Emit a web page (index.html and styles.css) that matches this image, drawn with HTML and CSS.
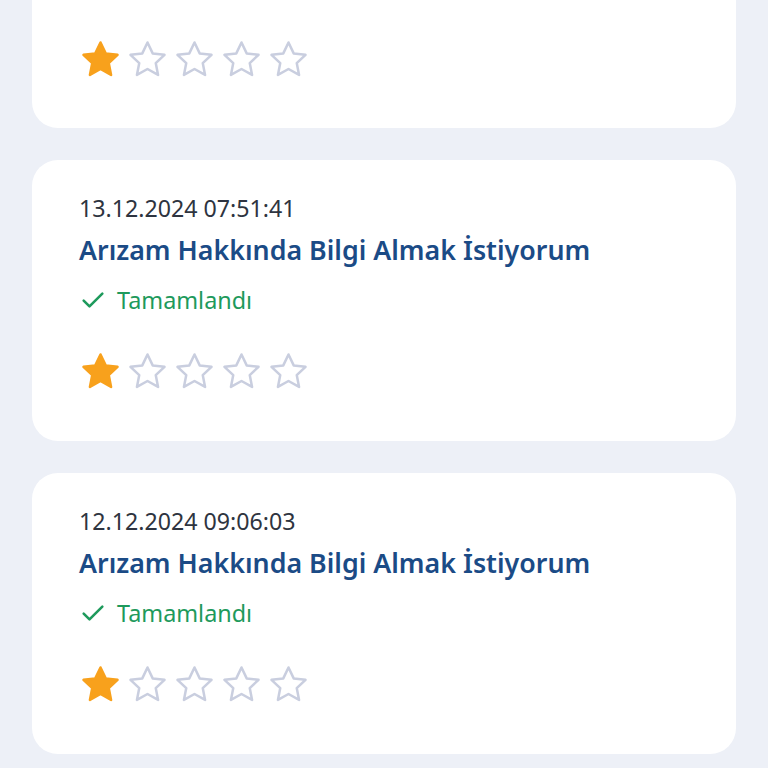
FILE: index.html
```html
<!DOCTYPE html>
<html lang="tr">
<head>
<meta charset="utf-8">
<link rel="stylesheet" href="styles.css">
</head>
<body>
<div class="list">
  <div class="card partial">
    <div class="stars">
      <svg class="star on" viewBox="0 0 24 24"><path d="M12 2.5l2.9 6.1 6.6.8-4.9 4.6 1.3 6.6L12 17.3l-5.9 3.3 1.3-6.6-4.9-4.6 6.6-.8z"/></svg>
      <svg class="star" viewBox="0 0 24 24"><path d="M12 2.5l2.9 6.1 6.6.8-4.9 4.6 1.3 6.6L12 17.3l-5.9 3.3 1.3-6.6-4.9-4.6 6.6-.8z"/></svg>
      <svg class="star" viewBox="0 0 24 24"><path d="M12 2.5l2.9 6.1 6.6.8-4.9 4.6 1.3 6.6L12 17.3l-5.9 3.3 1.3-6.6-4.9-4.6 6.6-.8z"/></svg>
      <svg class="star" viewBox="0 0 24 24"><path d="M12 2.5l2.9 6.1 6.6.8-4.9 4.6 1.3 6.6L12 17.3l-5.9 3.3 1.3-6.6-4.9-4.6 6.6-.8z"/></svg>
      <svg class="star" viewBox="0 0 24 24"><path d="M12 2.5l2.9 6.1 6.6.8-4.9 4.6 1.3 6.6L12 17.3l-5.9 3.3 1.3-6.6-4.9-4.6 6.6-.8z"/></svg>
    </div>
  </div>
  <div class="card">
    <div class="date">13.12.2024 07:51:41</div>
    <div class="title">Arızam Hakkında Bilgi Almak İstiyorum</div>
    <div class="status"><svg class="check" viewBox="0 0 24 24"><path d="M4 12.5l5 5L20 6.5"/></svg><span>Tamamlandı</span></div>
    <div class="stars">
      <svg class="star on" viewBox="0 0 24 24"><path d="M12 2.5l2.9 6.1 6.6.8-4.9 4.6 1.3 6.6L12 17.3l-5.9 3.3 1.3-6.6-4.9-4.6 6.6-.8z"/></svg>
      <svg class="star" viewBox="0 0 24 24"><path d="M12 2.5l2.9 6.1 6.6.8-4.9 4.6 1.3 6.6L12 17.3l-5.9 3.3 1.3-6.6-4.9-4.6 6.6-.8z"/></svg>
      <svg class="star" viewBox="0 0 24 24"><path d="M12 2.5l2.9 6.1 6.6.8-4.9 4.6 1.3 6.6L12 17.3l-5.9 3.3 1.3-6.6-4.9-4.6 6.6-.8z"/></svg>
      <svg class="star" viewBox="0 0 24 24"><path d="M12 2.5l2.9 6.1 6.6.8-4.9 4.6 1.3 6.6L12 17.3l-5.9 3.3 1.3-6.6-4.9-4.6 6.6-.8z"/></svg>
      <svg class="star" viewBox="0 0 24 24"><path d="M12 2.5l2.9 6.1 6.6.8-4.9 4.6 1.3 6.6L12 17.3l-5.9 3.3 1.3-6.6-4.9-4.6 6.6-.8z"/></svg>
    </div>
  </div>
  <div class="card">
    <div class="date">12.12.2024 09:06:03</div>
    <div class="title">Arızam Hakkında Bilgi Almak İstiyorum</div>
    <div class="status"><svg class="check" viewBox="0 0 24 24"><path d="M4 12.5l5 5L20 6.5"/></svg><span>Tamamlandı</span></div>
    <div class="stars">
      <svg class="star on" viewBox="0 0 24 24"><path d="M12 2.5l2.9 6.1 6.6.8-4.9 4.6 1.3 6.6L12 17.3l-5.9 3.3 1.3-6.6-4.9-4.6 6.6-.8z"/></svg>
      <svg class="star" viewBox="0 0 24 24"><path d="M12 2.5l2.9 6.1 6.6.8-4.9 4.6 1.3 6.6L12 17.3l-5.9 3.3 1.3-6.6-4.9-4.6 6.6-.8z"/></svg>
      <svg class="star" viewBox="0 0 24 24"><path d="M12 2.5l2.9 6.1 6.6.8-4.9 4.6 1.3 6.6L12 17.3l-5.9 3.3 1.3-6.6-4.9-4.6 6.6-.8z"/></svg>
      <svg class="star" viewBox="0 0 24 24"><path d="M12 2.5l2.9 6.1 6.6.8-4.9 4.6 1.3 6.6L12 17.3l-5.9 3.3 1.3-6.6-4.9-4.6 6.6-.8z"/></svg>
      <svg class="star" viewBox="0 0 24 24"><path d="M12 2.5l2.9 6.1 6.6.8-4.9 4.6 1.3 6.6L12 17.3l-5.9 3.3 1.3-6.6-4.9-4.6 6.6-.8z"/></svg>
    </div>
  </div>
</div>
</body>
</html>
```
FILE: styles.css
```css
html, body {
  margin: 0;
  padding: 0;
  background: #edf0f7;
  font-family: "Noto Sans", "Open Sans", sans-serif;
  overflow: hidden;
  height: 768px;
}
.list {
  display: flex;
  flex-direction: column;
  gap: 32px;
  padding: 0 32px;
  margin-top: -153px;
}
.card {
  background: #ffffff;
  border-radius: 26px;
  height: 281px;
  box-sizing: border-box;
  padding: 32px 48px 0 47px;
  display: flex;
  flex-direction: column;
}
.card.partial {
  justify-content: flex-end;
  padding-bottom: 47px;
}
.date {
  font-size: 23.2px;
  line-height: 32px;
  color: #2e3440;
}
.title {
  margin-top: 8px;
  font-size: 26.8px;
  line-height: 36px;
  font-weight: 600;
  color: #1b4b86;
}
.status {
  margin-top: 16px;
  display: flex;
  align-items: center;
  gap: 10px;
  font-size: 23.4px;
  line-height: 32px;
  color: #1e9a5c;
}
.check {
  width: 28px;
  height: 28px;
  fill: none;
  stroke: #1e9a5c;
  stroke-width: 2.2;
  stroke-linecap: round;
  stroke-linejoin: round;
}
.stars {
  margin-top: 34px;
  display: flex;
  gap: 4px;
}
.card.partial .stars {
  margin-top: 0;
}
.star {
  width: 43px;
  height: 43px;
  fill: none;
  stroke: #c9cedf;
  stroke-width: 1.4;
  stroke-linejoin: round;
}
.star.on {
  fill: #f8a11c;
  stroke: #f8a11c;
}
```
